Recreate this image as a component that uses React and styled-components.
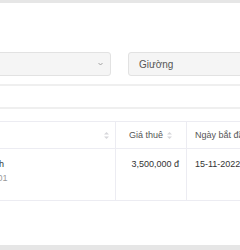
import React from 'react';
import styled, { createGlobalStyle } from 'styled-components';

const GlobalStyle = createGlobalStyle`
  html, body {
    margin: 0;
    padding: 0;
    background: #ffffff;
    overflow: hidden;
  }
  body {
    font-family: "Liberation Sans", Arial, sans-serif;
    color: #333333;
  }
`;

const Page = styled.div`
  width: 240px;
  height: 250px;
  display: flex;
  flex-direction: column;
  overflow: hidden;
  border-top: 3px solid #e6e6e6;
  box-sizing: border-box;
`;

// the screenshot is a crop of a wider page, so the content spills past both edges
const Content = styled.div`
  flex: 1;
  display: flex;
  flex-direction: column;
  margin-left: -50px;
  width: 400px;
`;

const FilterRow = styled.div`
  display: flex;
  gap: 17px;
  margin-top: 49px;
`;

const Select = styled.div`
  box-sizing: border-box;
  width: ${(p) => p.w}px;
  height: 24px;
  display: flex;
  align-items: center;
  justify-content: space-between;
  padding: 0 7px 0 10px;
  background: #f5f5f5;
  border: 1px solid #e2e2e2;
  border-radius: 3px;
  font-size: 10px;
  color: #555555;
  white-space: nowrap;
`;

const Chevron = () => (
  <svg width="5" height="4" viewBox="0 0 5 4">
    <path d="M0.5 1 L2.5 3 L4.5 1" fill="none" stroke="#9a9a9a" strokeWidth="0.9" />
  </svg>
);

const Divider = styled.div`
  height: 2px;
  background: #efefef;
  margin-top: ${(p) => p.top}px;
`;

const Table = styled.div`
  margin-top: 12px;
  border-top: 1px solid #ececf2;
  display: grid;
  grid-template-columns: 166px 71px 1fr;
`;

const HeadCell = styled.div`
  box-sizing: border-box;
  height: 27px;
  padding: 0 ${(p) => (p.right ? 14 : 6)}px 0 8px;
  display: flex;
  align-items: center;
  justify-content: ${(p) => (p.right ? 'flex-end' : 'space-between')};
  gap: 4px;
  border-bottom: 1px solid #ececf2;
  border-right: ${(p) => (p.last ? 'none' : '1px solid #ececf2')};
  font-size: 9px;
  color: #555555;
  white-space: nowrap;
`;

const Cell = styled.div`
  box-sizing: border-box;
  height: 52px;
  padding: 10px 7px 0 8px;
  display: flex;
  flex-direction: column;
  align-items: ${(p) => (p.right ? 'flex-end' : 'flex-start')};
  gap: 4px;
  border-bottom: 1px solid #ececf2;
  border-right: ${(p) => (p.last ? 'none' : '1px solid #ececf2')};
  font-size: 9px;
  color: #333333;
  white-space: nowrap;
`;

const Sub = styled.span`
  color: #9a9a9a;
`;

const SortIcon = () => (
  <svg width="5" height="7" viewBox="0 0 5 7">
    <path d="M2.5 0 L5 2.6 L0 2.6 Z" fill="#d6d6da" />
    <path d="M2.5 7 L5 4.4 L0 4.4 Z" fill="#d6d6da" />
  </svg>
);

const Footer = styled.div`
  margin-top: auto;
  height: 5px;
  background: #e6e6e6;
`;

export default function App() {
  return (
    <>
      <GlobalStyle />
      <Page>
        <Content>
          <FilterRow>
            <Select w={161}>
              <span>Tất cả</span>
              <Chevron />
            </Select>
            <Select w={200}>
              <span>Giường</span>
            </Select>
          </FilterRow>
          <Divider top={8} />
          <Divider top={21} />
          <Table>
            <HeadCell>
              <span>Khách</span>
              <SortIcon />
            </HeadCell>
            <HeadCell right>
              <span>Giá thuê</span>
              <SortIcon />
            </HeadCell>
            <HeadCell last>
              <span>Ngày bắt đầu</span>
            </HeadCell>
            <Cell>
              <span>Trần Thanh</span>
              <Sub>Phòng P101</Sub>
            </Cell>
            <Cell right>
              <span>3,500,000 đ</span>
            </Cell>
            <Cell last>
              <span>15-11-2022</span>
            </Cell>
          </Table>
          <Footer />
        </Content>
      </Page>
    </>
  );
}
